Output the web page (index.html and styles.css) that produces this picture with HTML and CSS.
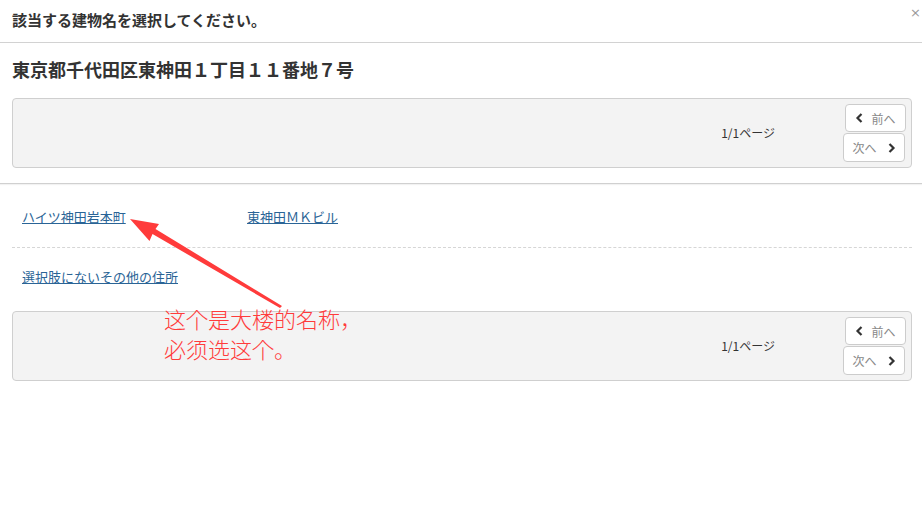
FILE: index.html
```html
<!DOCTYPE html>
<html lang="ja">
<head>
    <meta charset="UTF-8">
    <meta name="viewport" content="width=device-width, initial-scale=1.0">
    <title>建物名の選択</title>
    <link rel="stylesheet" href="styles.css">
</head>
<body>

    <div class="modal">
        <div class="modal-header">
            <h4 class="modal-title">該当する建物名を選択してください。</h4>
            <span class="close">&times;</span>
        </div>

        <div class="modal-top">
            <h3 class="address">東京都千代田区東神田１丁目１１番地７号</h3>

            <div class="pager">
                <span class="page-info">1/1ページ</span>
                <div class="pager-btns">
                    <button class="btn-page btn-prev">
                        <svg width="9" height="10" viewBox="0 0 9 10"><polyline points="6.5,1 2.5,5 6.5,9" fill="none" stroke="#333" stroke-width="2.2"/></svg>
                        前へ
                    </button>
                    <button class="btn-page btn-next">
                        次へ
                        <svg width="9" height="10" viewBox="0 0 9 10"><polyline points="2.5,1 6.5,5 2.5,9" fill="none" stroke="#333" stroke-width="2.2"/></svg>
                    </button>
                </div>
            </div>
        </div>

        <div class="modal-list">
            <div class="list-row row-first">
                <a href="#" class="item">ハイツ神田岩本町</a>
                <a href="#" class="item">東神田ＭＫビル</a>
            </div>
            <div class="list-row row-other">
                <a href="#" class="item">選択肢にないその他の住所</a>
            </div>

            <div class="pager">
                <span class="page-info">1/1ページ</span>
                <div class="pager-btns">
                    <button class="btn-page btn-prev">
                        <svg width="9" height="10" viewBox="0 0 9 10"><polyline points="6.5,1 2.5,5 6.5,9" fill="none" stroke="#333" stroke-width="2.2"/></svg>
                        前へ
                    </button>
                    <button class="btn-page btn-next">
                        次へ
                        <svg width="9" height="10" viewBox="0 0 9 10"><polyline points="2.5,1 6.5,5 2.5,9" fill="none" stroke="#333" stroke-width="2.2"/></svg>
                    </button>
                </div>
            </div>
        </div>
    </div>

    <!-- 注釈（スクリーンショットの書き込み） -->
    <svg class="note-arrow" width="922" height="529" viewBox="0 0 922 529">
        <polygon points="130,219 159,224 155.5,229 282,306 280,308 152.5,234 149.5,241" fill="#ff3b3b"/>
    </svg>
    <div class="note-text">这个是大楼的名称，<br>必须选这个。</div>

</body>
</html>
```

FILE: styles.css
```css
body {
    font-family: "Noto Sans CJK JP", "Noto Sans", sans-serif;
    margin: 0;
    background-color: #fff;
    color: #333;
}
.modal {
    width: 922px;
}
.modal-header {
    display: flex;
    justify-content: space-between;
    align-items: flex-start;
    height: 42px;
    padding: 0 0 0 12px;
    border-bottom: 1px solid #d2d2d2;
}
.modal-title {
    margin: 0;
    padding-top: 9px;
    font-size: 15px;
    line-height: 21px;
    font-weight: bold;
    color: #333;
}
.close {
    font-family: "DejaVu Sans", sans-serif;
    font-size: 13px;
    line-height: 14px;
    color: #9a9a9a;
    margin-top: 6px;
    margin-right: 1px;
}
.modal-top {
    padding: 14px 10px 15px 12px;
    border-bottom: 1px solid #d0d0d0;
    box-shadow: 0 1px 1px rgba(0,0,0,0.05);
}
.address {
    margin: 0 0 17px;
    font-size: 18px;
    line-height: 24px;
    font-weight: bold;
    color: #333;
}
.pager {
    display: flex;
    justify-content: flex-end;
    align-items: center;
    height: 68px;
    background-color: #f3f3f3;
    border: 1px solid #cfcfcf;
    border-radius: 4px;
    padding: 0 5px;
}
.page-info {
    font-size: 12px;
    margin-right: 68px;
    margin-top: -2px;
}
.pager-btns {
    display: flex;
    flex-direction: column;
    align-items: flex-end;
    gap: 1px;
}
.btn-page {
    display: flex;
    align-items: center;
    justify-content: center;
    gap: 7px;
    height: 28px;
    background-color: #fff;
    border: 1px solid #ccc;
    border-radius: 4px;
    font-family: inherit;
    font-size: 12px;
    color: #888;
    padding: 0;
}
.btn-prev {
    width: 61px;
}
.btn-next {
    width: 62px;
    height: 29px;
    margin-right: 1px;
    gap: 10px;
}
.modal-list {
    padding: 0 10px 0 12px;
}
.list-row {
    display: flex;
    padding: 0 10px;
    font-size: 13px;
    line-height: 18px;
}
.row-first {
    padding-top: 24px;
    padding-bottom: 21px;
    border-bottom: 1px dashed #d6d6d6;
}
.row-other {
    padding-top: 20px;
    padding-bottom: 25px;
}
.item {
    color: #2a6496;
    text-decoration: underline;
    width: 225px;
}
.note-arrow {
    position: absolute;
    left: 0;
    top: 0;
    pointer-events: none;
}
.note-text {
    position: absolute;
    left: 164px;
    top: 303px;
    font-family: "Noto Sans CJK SC", sans-serif;
    font-size: 22px;
    line-height: 30px;
    font-weight: 300;
    color: #ff3b3b;
}
```
